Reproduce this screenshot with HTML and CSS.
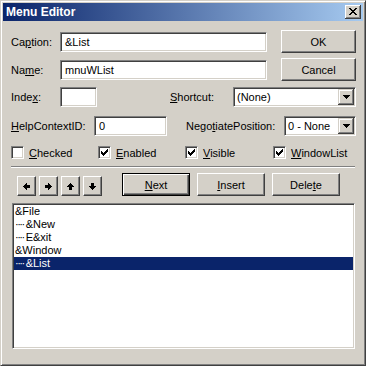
FILE: index.html
```html
<!DOCTYPE html>
<html lang="en">
<head>
  <meta charset="UTF-8">
  <title>Menu Editor</title>
  <link rel="stylesheet" href="styles.css">
</head>
<body>

  <div class="window">
    <div class="titlebar">
      <span class="title">Menu Editor</span>
      <span class="close-btn">
        <svg width="8" height="7" viewBox="0 0 8 7"><path d="M0 0h2v1H0zM6 0h2v1H6zM1 1h2v1H1zM5 1h2v1H5zM2 2h4v1H2zM3 3h2v1H3zM2 4h4v1H2zM1 5h2v1H1zM5 5h2v1H5zM0 6h2v1H0zM6 6h2v1H6z"/></svg>
      </span>
    </div>

    <div class="content">
      <div class="row row-top">
        <label class="lbl lbl-short">Ca<u>p</u>tion:</label>
        <div class="textbox tb-wide">&amp;List</div>
        <button class="btn btn-side">OK</button>
      </div>

      <div class="row row-name">
        <label class="lbl lbl-short">Na<u>m</u>e:</label>
        <div class="textbox tb-wide">mnuWList</div>
        <button class="btn btn-side">Cancel</button>
      </div>

      <div class="row row-index">
        <label class="lbl lbl-short">Inde<u>x</u>:</label>
        <div class="textbox tb-index"></div>
        <label class="lbl lbl-shortcut"><u>S</u>hortcut:</label>
        <div class="combo combo-shortcut">
          <span class="combo-text">(None)</span>
          <span class="combo-btn">
            <svg width="7" height="4" viewBox="0 0 7 4"><path d="M0 0h7v1H0zM1 1h5v1H1zM2 2h3v1H2zM3 3h1v1H3z"/></svg>
          </span>
        </div>
      </div>

      <div class="row row-help">
        <label class="lbl lbl-help"><u>H</u>elpContextID:</label>
        <div class="textbox tb-help">0</div>
        <label class="lbl lbl-negotiate">Nego<u>t</u>iatePosition:</label>
        <div class="combo combo-negotiate">
          <span class="combo-text">0 - None</span>
          <span class="combo-btn">
            <svg width="7" height="4" viewBox="0 0 7 4"><path d="M0 0h7v1H0zM1 1h5v1H1zM2 2h3v1H2zM3 3h1v1H3z"/></svg>
          </span>
        </div>
      </div>

      <div class="checks">
        <div class="check">
          <span class="box"></span>
          <span><u>C</u>hecked</span>
        </div>
        <div class="check">
          <span class="box"><svg width="7" height="7" viewBox="0 0 7 7"><path d="M6 0h1v1H6zM5 1h2v1H5zM0 2h1v1H0zM4 2h3v1H4zM0 3h2v1H0zM3 3h3v1H3zM0 4h5v1H0zM1 5h3v1H1zM2 6h1v1H2z"/></svg></span>
          <span><u>E</u>nabled</span>
        </div>
        <div class="check">
          <span class="box"><svg width="7" height="7" viewBox="0 0 7 7"><path d="M6 0h1v1H6zM5 1h2v1H5zM0 2h1v1H0zM4 2h3v1H4zM0 3h2v1H0zM3 3h3v1H3zM0 4h5v1H0zM1 5h3v1H1zM2 6h1v1H2z"/></svg></span>
          <span><u>V</u>isible</span>
        </div>
        <div class="check">
          <span class="box"><svg width="7" height="7" viewBox="0 0 7 7"><path d="M6 0h1v1H6zM5 1h2v1H5zM0 2h1v1H0zM4 2h3v1H4zM0 3h2v1H0zM3 3h3v1H3zM0 4h5v1H0zM1 5h3v1H1zM2 6h1v1H2z"/></svg></span>
          <span><u>W</u>indowList</span>
        </div>
      </div>

      <div class="separator"></div>

      <div class="row row-tools">
        <div class="arrows">
          <button class="btn btn-arrow"><svg width="7" height="7" viewBox="0 0 7 7"><path d="M3 0h1v1H3zM2 1h2v1H2zM1 2h6v1H1zM0 3h7v1H0zM1 4h6v1H1zM2 5h2v1H2zM3 6h1v1H3z"/></svg></button>
          <button class="btn btn-arrow"><svg width="7" height="7" viewBox="0 0 7 7"><path d="M3 0h1v1H3zM3 1h2v1H3zM0 2h6v1H0zM0 3h7v1H0zM0 4h6v1H0zM3 5h2v1H3zM3 6h1v1H3z"/></svg></button>
          <button class="btn btn-arrow"><svg width="7" height="7" viewBox="0 0 7 7"><path d="M3 0h1v1H3zM2 1h3v1H2zM1 2h5v1H1zM0 3h7v1H0zM2 4h3v3H2z"/></svg></button>
          <button class="btn btn-arrow"><svg width="7" height="7" viewBox="0 0 7 7"><path d="M2 0h3v3H2zM0 3h7v1H0zM1 4h5v1H1zM2 5h3v1H2zM3 6h1v1H3z"/></svg></button>
        </div>
        <button class="btn btn-action btn-default"><u>N</u>ext</button>
        <button class="btn btn-action"><u>I</u>nsert</button>
        <button class="btn btn-action">Dele<u>t</u>e</button>
      </div>

      <div class="listbox">
        <div class="item">&amp;File</div>
        <div class="item"><span class="dots">····</span>&amp;New</div>
        <div class="item"><span class="dots">····</span>E&amp;xit</div>
        <div class="item">&amp;Window</div>
        <div class="item selected"><span class="dots">····</span>&amp;List</div>
      </div>
    </div>
  </div>

</body>
</html>
```

FILE: styles.css
```css
* {
  box-sizing: border-box;
}
html, body {
  margin: 0;
  padding: 0;
}
body {
  width: 366px;
  height: 366px;
  font-family: "Liberation Sans", Arial, sans-serif;
  font-size: 11px;
  color: #000;
  background: #d4d0c8;
}
u {
  text-decoration: underline;
  text-underline-offset: 1px;
}

.window {
  width: 366px;
  height: 366px;
  background: #d4d0c8;
  border: 1px solid;
  border-color: #d4d0c8 #404040 #404040 #d4d0c8;
  box-shadow: inset 1px 1px #fff, inset -1px -1px #808080;
  padding: 2px;
  display: flex;
  flex-direction: column;
}
.titlebar {
  height: 18px;
  background: linear-gradient(to right, #0a246a, #a6caf0);
  display: flex;
  align-items: center;
  justify-content: space-between;
  padding: 0 2px 0 3px;
}
.title {
  color: #fff;
  font-weight: bold;
  font-size: 12px;
}
.close-btn {
  width: 16px;
  height: 14px;
  background: #d4d0c8;
  box-shadow: inset -1px -1px #404040, inset 1px 1px #fff, inset -2px -2px #808080;
  display: flex;
  align-items: center;
  justify-content: center;
  padding: 0 1px 1px 0;
}

.content {
  padding: 9px 7px 0 8px;
}
.row {
  display: flex;
  align-items: center;
}
.row-top, .row-name {
  height: 23px;
}
.row-top {
  margin-top: 0;
}
.row-name {
  margin-top: 5px;
}
.row-index {
  height: 20px;
  margin-top: 6px;
}
.row-help {
  height: 20px;
  margin-top: 9px;
}

.lbl {
  white-space: nowrap;
}
.lbl-short {
  width: 49px;
}
.lbl-help {
  width: 83px;
}
.lbl-shortcut {
  margin-left: auto;
  width: 63px;
}
.lbl-negotiate {
  margin-left: auto;
  width: 98px;
}

.textbox, .combo, .listbox, .box {
  background: #fff;
  border: 1px solid;
  border-color: #808080 #fff #fff #808080;
  box-shadow: inset 1px 1px #404040, inset -1px -1px #d4d0c8;
}
.textbox {
  height: 20px;
  padding: 0 0 0 4px;
  line-height: 18px;
  white-space: nowrap;
}
.tb-wide {
  width: 207px;
}
.tb-index {
  width: 37px;
}
.tb-help {
  width: 73px;
}

.combo {
  height: 20px;
  padding: 1px;
  display: flex;
  align-items: center;
}
.combo-shortcut {
  width: 123px;
}
.combo-negotiate {
  width: 72px;
}
.combo-text {
  padding-left: 2px;
  white-space: nowrap;
}
.combo-btn {
  margin-left: auto;
  width: 16px;
  height: 16px;
  background: #d4d0c8;
  box-shadow: inset -1px -1px #404040, inset 1px 1px #d4d0c8, inset -2px -2px #808080, inset 2px 2px #fff;
  display: flex;
  align-items: center;
  justify-content: center;
  padding-bottom: 1px;
}

.btn {
  font-family: inherit;
  font-size: 11px;
  color: #000;
  background: #d4d0c8;
  border: 1px solid;
  border-color: #fff #404040 #404040 #fff;
  box-shadow: inset -1px -1px #808080;
  padding: 0;
  margin: 0;
  display: flex;
  align-items: center;
  justify-content: center;
}
.btn-side {
  margin-left: auto;
  width: 75px;
  height: 23px;
}
.btn-default {
  border-color: #000;
  box-shadow: inset 1px 1px #fff, inset -1px -1px #404040, inset -2px -2px #808080;
}

.checks {
  display: grid;
  grid-template-columns: 87px 87px 88px auto;
  margin-top: 10px;
  height: 13px;
}
.check {
  display: flex;
  align-items: center;
  gap: 5px;
  white-space: nowrap;
}
.box {
  width: 13px;
  height: 13px;
  display: flex;
  align-items: center;
  justify-content: center;
}

.separator {
  margin-top: 7px;
  margin-right: 1px;
  height: 2px;
  border-top: 1px solid #808080;
  border-bottom: 1px solid #fff;
}

.row-tools {
  margin-top: 5px;
  height: 23px;
}
.arrows {
  display: flex;
  gap: 3px;
  margin-left: 6px;
  margin-right: 20px;
  padding-top: 3px;
}
.btn-arrow {
  width: 19px;
  height: 20px;
}
.btn-action {
  width: 68px;
  height: 23px;
  margin-right: 7px;
}

.listbox {
  margin-top: 7px;
  margin-left: 1px;
  width: 343px;
  height: 146px;
  padding: 1px;
}
.item {
  height: 13px;
  line-height: 13px;
  padding-left: 1px;
  white-space: nowrap;
}
.item.selected {
  background: #0a246a;
  color: #fff;
}
.dots {
  letter-spacing: -1.5px;
  margin-right: 2px;
}
```
